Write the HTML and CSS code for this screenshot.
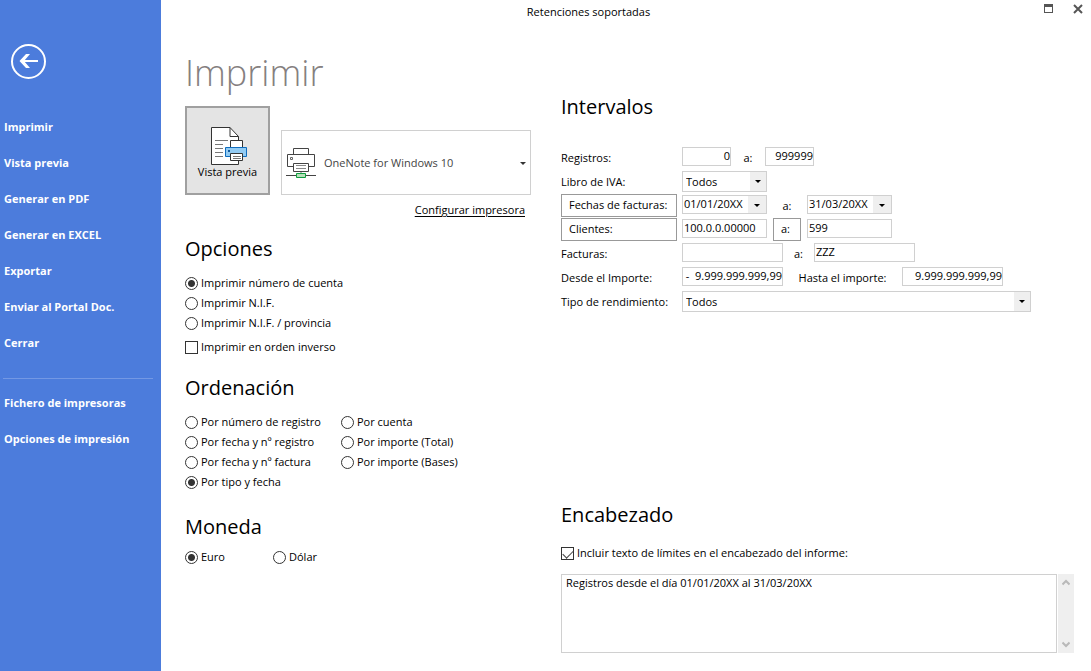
FILE: index.html
```html
<!DOCTYPE html>
<html lang="es">
<head>
<meta charset="utf-8">
<meta name="viewport" content="width=device-width, initial-scale=1">
<title>Retenciones soportadas</title>
<link rel="stylesheet" href="styles.css">
</head>
<body>
<div class="app">
  <aside class="sidebar">
    <button class="back" type="button" aria-label="Volver">
      <svg width="35" height="35" viewBox="0 0 35 35" fill="none" stroke="#fff">
        <circle cx="17.5" cy="17.5" r="16.5" stroke-width="2"/>
        <path d="M11 17H27" stroke-width="2"/>
        <path d="M19 10H15L8.500 17L15 24H19L13 17Z" fill="#fff" stroke="none"/>
      </svg>
    </button>
    <nav class="menu">
      <a href="#imprimir">Imprimir</a>
      <a href="#vista">Vista previa</a>
      <a href="#pdf">Generar en PDF</a>
      <a href="#excel">Generar en EXCEL</a>
      <a href="#exportar">Exportar</a>
      <a href="#portal">Enviar al Portal Doc.</a>
      <a href="#cerrar">Cerrar</a>
      <hr>
      <a href="#fichero">Fichero de impresoras</a>
      <a href="#opciones">Opciones de impresión</a>
    </nav>
  </aside>

  <main class="main">
    <header class="titlebar">
      <span class="caption">Retenciones soportadas</span>
      <div class="window-buttons">
        <button type="button" aria-label="Maximizar">
          <svg width="9" height="9" viewBox="0 0 9 9" shape-rendering="crispEdges"><path d="M0 0H9V9H0ZM1 3V8H8V3Z" fill="#555" fill-rule="evenodd"/></svg>
        </button>
        <button type="button" aria-label="Cerrar ventana">
          <svg width="10" height="10" viewBox="0 0 10 10"><path d="M1 1L9 9M9 1L1 9" stroke="#555" stroke-width="2"/></svg>
        </button>
      </div>
    </header>

    <div class="content">
      <div class="left">
        <h1>Imprimir</h1>
        <div class="print-row">
          <button class="preview" type="button">
            <svg width="38" height="39" viewBox="0 0 38 39" fill="none" stroke="#333">
              <path d="M1.500 1.500H20L28.500 10.500V38.500H1.500Z" fill="#fff"/>
              <path d="M20 1.500V10.500H28.500"/>
              <path d="M5 14.500H18M5 18.500H13M5 22.500H13M5 26.500H13M5 30.500H13" stroke="#777"/>
              <path d="M20.500 14.500H32.500V22H20.500Z" fill="#fff"/>
              <path d="M15.500 21.500H36.500V30.500H15.500Z" fill="#92cbf3" stroke="#0f6cbd"/>
              <path d="M18 24H20V26H18Z" fill="#0f5a9e" stroke="none"/>
              <path d="M20.500 27.500H32.500V34.500H20.500Z" fill="#fff"/>
              <path d="M23 30.500H31M23 32.500H31" stroke="#777"/>
            </svg>
            <span>Vista previa</span>
          </button>
          <div class="printer">
            <svg width="32" height="32" viewBox="0 0 32 32" fill="none" stroke="#444">
              <path d="M8.500 8V1.500H23.500V8"/>
              <path d="M8.500 19.500H2.500V7.500H29.500V19.500H23.500"/>
              <path d="M5.500 10.500H7.500V12.500H5.500Z" stroke="#666"/>
              <path d="M8.500 16.500H23.500V24.500H8.500Z"/>
              <path d="M11 18.500H21M11 21.500H21" stroke="#888"/>
              <path d="M16 25V27" stroke="#bbb" stroke-width="2"/>
              <path d="M1 28.500H31"/>
              <path d="M11.500 26.500H20.500V30.500H11.500Z" fill="#b7e0b9" stroke="#0f9d3f"/>
            </svg>
            <select aria-label="Impresora"><option>OneNote for Windows 10</option></select>
          </div>
        </div>
        <a class="configure" href="#configurar">Configurar impresora</a>

        <section class="group">
          <h2>Opciones</h2>
          <label class="choice"><input type="radio" name="opt" checked>Imprimir número de cuenta</label>
          <label class="choice"><input type="radio" name="opt">Imprimir N.I.F.</label>
          <label class="choice"><input type="radio" name="opt">Imprimir N.I.F. / provincia</label>
          <label class="choice apart"><input type="checkbox">Imprimir en orden inverso</label>
        </section>

        <section class="group">
          <h2>Ordenación</h2>
          <div class="columns">
            <div>
              <label class="choice"><input type="radio" name="ord">Por número de registro</label>
              <label class="choice"><input type="radio" name="ord">Por fecha y nº registro</label>
              <label class="choice"><input type="radio" name="ord">Por fecha y nº factura</label>
              <label class="choice"><input type="radio" name="ord" checked>Por tipo y fecha</label>
            </div>
            <div>
              <label class="choice"><input type="radio" name="ord">Por cuenta</label>
              <label class="choice"><input type="radio" name="ord">Por importe (Total)</label>
              <label class="choice"><input type="radio" name="ord">Por importe (Bases)</label>
            </div>
          </div>
        </section>

        <section class="group compact">
          <h2>Moneda</h2>
          <div class="currency">
            <label class="choice"><input type="radio" name="mon" checked>Euro</label>
            <label class="choice"><input type="radio" name="mon">Dólar</label>
          </div>
        </section>
      </div>

      <div class="right">
        <section class="ranges">
          <h2>Intervalos</h2>
          <div class="row">
            <label class="name" for="reg1">Registros:</label>
            <input class="field short num" id="reg1" type="text" value="0">
            <label class="sep sep-short" for="reg2">a:</label>
            <input class="field short num" id="reg2" type="text" value="999999">
          </div>
          <div class="row">
            <label class="name" for="iva">Libro de IVA:</label>
            <div class="combo medium tall"><select id="iva"><option>Todos</option></select></div>
          </div>
          <div class="row">
            <div class="name"><button class="box" type="button">Fechas de facturas:</button></div>
            <div class="combo medium"><input type="text" value="01/01/20XX" aria-label="Fecha inicial"><button type="button" aria-label="Abrir calendario inicial"></button></div>
            <label class="sep sep-medium" for="date2">a:</label>
            <div class="combo medium"><input id="date2" type="text" value="31/03/20XX"><button type="button" aria-label="Abrir calendario final"></button></div>
          </div>
          <div class="row">
            <div class="name"><button class="box" type="button">Clientes:</button></div>
            <input class="field medium" type="text" value="100.0.0.00000" aria-label="Cliente inicial">
            <div class="sep sep-medium"><button class="box to" type="button">a:</button></div>
            <input class="field medium" type="text" value="599" aria-label="Cliente final">
          </div>
          <div class="row">
            <label class="name" for="fac1">Facturas:</label>
            <input class="field long" id="fac1" type="text">
            <label class="sep sep-long" for="fac2">a:</label>
            <input class="field long" id="fac2" type="text" value="ZZZ">
          </div>
          <div class="row">
            <label class="name" for="imp1">Desde el Importe:</label>
            <input class="field long num" id="imp1" type="text" value="-&nbsp;&nbsp;9.999.999.999,99">
            <label class="sep sep-text" for="imp2">Hasta el importe:</label>
            <input class="field long num" id="imp2" type="text" value="9.999.999.999,99">
          </div>
          <div class="row">
            <label class="name" for="tipo">Tipo de rendimiento:</label>
            <div class="combo wide tall"><select id="tipo"><option>Todos</option></select></div>
          </div>
        </section>

        <section class="heading-text">
          <h2>Encabezado</h2>
          <label class="choice"><input type="checkbox" checked>Incluir texto de límites en el encabezado del informe:</label>
          <div class="memo">
            <textarea aria-label="Texto del encabezado">Registros desde el día 01/01/20XX al 31/03/20XX</textarea>
            <div class="scroll">
              <button type="button" aria-label="Subir"><svg width="8" height="7" viewBox="0 0 8 7"><path d="M0.500 5.500L4 2L7.500 5.500" fill="none" stroke="#b9b9b9" stroke-width="2"/></svg></button>
              <button type="button" aria-label="Bajar"><svg width="8" height="7" viewBox="0 0 8 7"><path d="M0.500 1.500L4 5L7.500 1.500" fill="none" stroke="#b9b9b9" stroke-width="2"/></svg></button>
            </div>
          </div>
        </section>
      </div>
    </div>
  </main>
</div>
</body>
</html>
```
FILE: styles.css
```css
* { box-sizing: border-box; }

body {
  margin: 0;
  background: #fff;
  color: #000;
  font: 11px/20px "Open Sans", "Noto Sans", sans-serif;
}

button, input, select, textarea { font: inherit; color: inherit; }
button { padding: 0; border: 0; background: none; }
input, select, textarea { margin: 0; outline: 0; border-radius: 0; }
svg { display: block; }
h1, h2 { margin: 0; font-weight: 400; }
h1 { color: #857f7f; font-size: 36px; font-weight: 300; line-height: 50px; }
h2 { font-size: 20px; line-height: 32px; margin-bottom: 8px; }

.app {
  display: grid;
  grid-template-columns: 161px 1fr;
  min-height: 100vh;
}

/* Sidebar */
.sidebar { background: #4c7cdc; padding-top: 44px; }
.back { display: block; margin: 0 0 30px 11px; }
.menu { display: flex; flex-direction: column; }
.menu a {
  padding-left: 4px;
  color: #fff;
  font-weight: 700;
  line-height: 36px;
  text-decoration: none;
  white-space: nowrap;
}
.menu hr {
  width: 150px;
  height: 1px;
  margin: 17px 0 6px 3px;
  border: 0;
  background: #7398e4;
}

/* Title bar */
.main { display: flex; flex-direction: column; }
.titlebar { display: flex; height: 24px; line-height: 24px; }
.caption { flex: 1; text-align: center; }
.window-buttons {
  display: flex;
  justify-content: flex-end;
  align-items: flex-start;
  gap: 20px;
  width: 75px;
  padding: 4px 8px 0 0;
}

.content {
  flex: 1;
  display: grid;
  grid-template-columns: 346px 1fr;
  gap: 30px;
  padding: 24px 17px 18px 24px;
}

/* Printer selection */
.print-row { display: flex; align-items: flex-end; gap: 11px; margin-top: 8px; }
.preview {
  display: flex;
  flex-direction: column;
  align-items: center;
  justify-content: center;
  width: 85px;
  height: 89px;
  padding-top: 3px;
  border: 2px solid #a0a0a0;
  background: #e4e4e4;
  line-height: 14px;
}
.preview svg { margin-left: 2px; }
.printer {
  position: relative;
  flex: 1;
  display: flex;
  align-items: center;
  height: 65px;
  padding-left: 3px;
  border: 1px solid #d0d0d0;
  color: #444;
}
.printer select {
  flex: 1;
  align-self: stretch;
  padding: 0 0 0 7px;
  border: 0;
  background: none;
  appearance: none;
}
.printer::after {
  content: "";
  position: absolute;
  top: 31px;
  right: 4px;
  border: 3px solid transparent;
  border-top-color: #333;
  border-bottom: 0;
  pointer-events: none;
}
.configure {
  display: block;
  width: max-content;
  margin: 5px 6px 0 auto;
  color: #000;
  text-underline-offset: 2px;
}

/* Option groups */
.group { min-height: 124px; margin-top: 15px; }
.configure + .group { margin-top: 13px; }
.choice { display: flex; align-items: center; gap: 3px; height: 20px; white-space: nowrap; }
.choice.apart { margin-top: 4px; }
.choice input {
  appearance: none;
  flex: none;
  width: 13px;
  height: 13px;
  border: 1px solid #333;
  background: #fff;
}
.choice input[type="radio"] { border-radius: 50%; }
.choice input[type="radio"]:checked {
  background: radial-gradient(circle, #333 3px, #fff 4px);
}
.choice input[type="checkbox"]:checked::after {
  content: "";
  display: block;
  width: 9px;
  height: 5px;
  margin: 2px 0 0 1px;
  border: solid #444;
  border-width: 0 0 1px 1px;
  transform: rotate(-45deg);
}
.columns { display: grid; grid-template-columns: 156px 1fr; }
.currency { display: grid; grid-template-columns: 88px 1fr; }
.compact { min-height: 0; }
.compact h2 { margin-bottom: 4px; }

/* Range form */
.right { display: flex; flex-direction: column; justify-content: space-between; padding-top: 43px; }
.ranges h2 { margin-bottom: 22px; }
.row { display: flex; align-items: center; height: 24px; }
.name { flex: none; width: 121px; white-space: nowrap; }
label.name, label.sep { padding-top: 2px; }
.field, .combo { height: 19px; margin-bottom: 1px; border: 1px solid #d0d0d0; background: #fff; }
.field { padding: 0 0 2px 1px; line-height: 15px; }
.num { padding-left: 0; }
.num { text-align: right; }
.short { width: 49px; }
.medium { width: 85px; }
.long { width: 101px; }
.wide { width: 349px; }
.combo { position: relative; display: flex; }
.combo.tall { height: 21px; margin-bottom: 0; }
.combo input { flex: 1; min-width: 0; padding: 0 1px 2px; border: 0; line-height: 15px; }
.combo button { position: relative; width: 18px; background: #efefef; }
.combo select {
  flex: 1;
  padding: 0 20px 0 3px;
  border: 0;
  appearance: none;
  background: linear-gradient(#efefef, #efefef) right / 16px 100% no-repeat;
}
.combo button::after, .combo.tall::after {
  content: "";
  position: absolute;
  top: 8px;
  right: 6px;
  border: 3px solid transparent;
  border-top-color: #000;
  border-bottom: 0;
  pointer-events: none;
}
.combo.tall::after { right: 5px; }
.sep { flex: none; text-align: center; white-space: nowrap; }
.sep-short { width: 34px; }
.sep-medium { width: 40px; }
.sep-long { width: 31px; }
.sep-text { width: 119px; }
.box {
  display: block;
  width: 116px;
  height: 23px;
  padding-left: 7px;
  border: 1px solid #999;
  background: #fff;
  text-align: left;
}
.box.to { width: 28px; margin: 0 auto; }

/* Report header */
.heading-text h2 { margin-bottom: 12px; }
.memo { display: flex; gap: 1px; height: 79px; margin-top: 11px; }
.memo textarea {
  flex: 1;
  padding: 0 4px;
  border: 1px solid #d0d0d0;
  line-height: 16px;
  resize: none;
  overflow: hidden;
}
.scroll {
  display: flex;
  flex-direction: column;
  justify-content: space-between;
  align-items: center;
  width: 16px;
  padding: 5px 0;
  background: #efefef;
}
```
